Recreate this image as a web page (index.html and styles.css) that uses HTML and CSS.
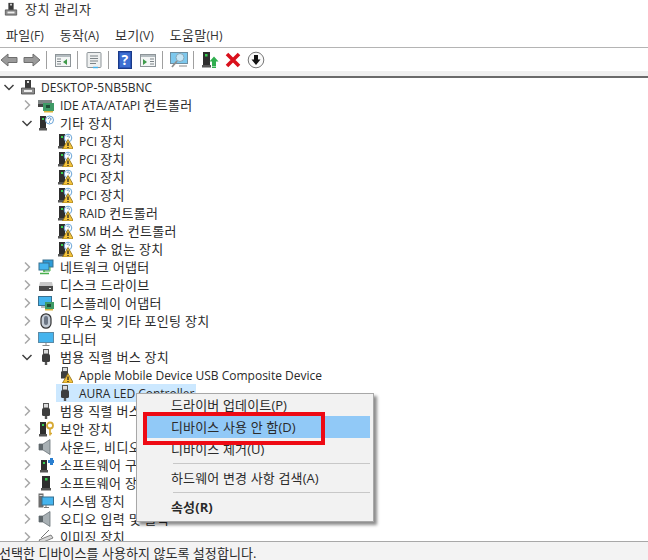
FILE: index.html
```html
<!DOCTYPE html>
<html lang="ko">
<head>
<meta charset="utf-8">
<title>장치 관리자</title>
<link rel="stylesheet" href="styles.css">
</head>
<body>
<svg class="defs" width="0" height="0" aria-hidden="true">
  <defs>
    <g id="warn"><path d="M4 15.5 9.5 6 15 15.5Z" fill="#f5c33b" stroke="#8a6a10" stroke-width=".8"/><path d="M9.5 9v3.4M9.5 13.4v1" stroke="#222" stroke-width="1.3"/></g>
    <g id="tower"><rect x="2" y="1" width="6" height="12" fill="#2e2e2e"/><rect x="4" y="3" width="2" height="2" fill="#35d04f"/><rect x="1" y="13" width="8" height="2.5" fill="#555"/></g>
    <symbol id="i-pc" viewBox="0 0 16 16"><rect x="5" y="1" width="6" height="8" fill="#3a3a3a"/><rect x="7" y="2" width="2" height="2" fill="#ddd"/><path d="M1.5 9h13v6h-13z" fill="#8d8d8d" stroke="#444" stroke-width=".8"/><rect x="4" y="11" width="8" height="2" fill="#eee"/></symbol>
    <symbol id="i-ide" viewBox="0 0 16 16"><path d="M0 3h14v4H0z" fill="#7f8585"/><path d="M0 7h6v3H0z" fill="#444"/><rect x="5" y="6" width="11" height="8" fill="#3f9a66"/><path d="M6 14h9v1.500H6z" fill="#d9b43c"/><rect x="8" y="8" width="4" height="3" fill="#1f4d36"/></symbol>
    <symbol id="i-other" viewBox="0 0 16 16"><use href="#tower"/><circle cx="11.500" cy="5" r="4" fill="#fff" stroke="#6aa5d8" stroke-width="1"/><path d="M10.200 4a1.400 1.400 0 1 1 2 1.400c-.6.3-.7.6-.7 1M11.500 7.200v.8" fill="none" stroke="#3a78b5" stroke-width=".9"/></symbol>
    <symbol id="i-unk" viewBox="0 0 16 16"><use href="#tower"/><circle cx="11" cy="5" r="3.800" fill="#fff" stroke="#6aa5d8"/><path d="M10 4a1.200 1.200 0 1 1 1.700 1.200" fill="none" stroke="#3a78b5" stroke-width=".8"/><use href="#warn" transform="translate(1.500 .5)"/></symbol>
    <symbol id="i-net" viewBox="0 0 16 16"><rect x="5" y="1" width="10" height="7" fill="#2c9bd8" stroke="#39708f"/><rect x="1" y="4" width="10" height="7" fill="#45b4ee" stroke="#39708f"/><path d="M6 11v2M2 14.500h9" stroke="#49b04d" stroke-width="1.600"/><path d="M12 8v4h-6" fill="none" stroke="#49b04d"/></symbol>
    <symbol id="i-disk" viewBox="0 0 16 16"><path d="M2 5h12l1 4H1z" fill="#c9c9c9"/><rect x="1" y="9" width="14" height="5" fill="#4a4a4a"/><rect x="11" y="11" width="2" height="1" fill="#e8e8e8"/></symbol>
    <symbol id="i-disp" viewBox="0 0 16 16"><rect x=".5" y="1.500" width="13" height="9" fill="#45b4ee" stroke="#39708f"/><path d="M3 12h7" stroke="#777"/><rect x="7" y="7" width="9" height="7" fill="#3f9a66"/><rect x="9" y="9" width="4" height="3" fill="#1f4d36"/><path d="M7 14h8v1.500H7z" fill="#d9b43c"/></symbol>
    <symbol id="i-mouse" viewBox="0 0 16 16"><rect x="3" y=".8" width="10" height="14.400" rx="5" fill="#c4ccd6" stroke="#333" stroke-width="1.200"/><rect x="6" y="3" width="4" height="9" rx="2" fill="#6c7684"/></symbol>
    <symbol id="i-mon" viewBox="0 0 16 16"><rect x=".5" y="1.500" width="15" height="10" fill="#45b4ee" stroke="#5b8aa6"/><path d="M8 12v2M4.500 14.500h7" stroke="#8a8a8a"/></symbol>
    <symbol id="i-usb" viewBox="0 0 16 16"><rect x="5.500" y=".5" width="5" height="4.500" fill="#dcdcdc" stroke="#555"/><rect x="4" y="5" width="8" height="8" rx="1.500" fill="#3d3d3d"/><rect x="6.800" y="13" width="2.400" height="3" fill="#555"/></symbol>
    <symbol id="i-usbw" viewBox="0 0 16 16"><rect x="5.500" y=".5" width="5" height="4" fill="#dcdcdc" stroke="#555"/><rect x="4" y="4.500" width="7" height="7" fill="#3d3d3d"/><use href="#warn" transform="translate(1.500 .5)"/></symbol>
    <symbol id="i-sec" viewBox="0 0 16 16"><use href="#tower"/><circle cx="12" cy="4.500" r="3" fill="none" stroke="#d6a933" stroke-width="1.800"/><path d="M12 7.500v7M12 12.500h2" stroke="#d6a933" stroke-width="1.600"/></symbol>
    <symbol id="i-snd" viewBox="0 0 16 16"><path d="M1 5h4l7-4.500v15L5 11H1z" fill="#a8b0b4" stroke="#6b7478" stroke-width=".8"/><path d="M1 5h4v6H1z" fill="#5f676b"/></symbol>
    <symbol id="i-swc" viewBox="0 0 16 16"><rect x="3" y="3" width="6" height="10" fill="#2e2e2e"/><rect x="5" y="5" width="2" height="2" fill="#35d04f"/><rect x="2" y="13" width="8" height="2.500" fill="#555"/><path d="M10 3h2V1h3v2h1v3h-1v2h-3V6h-2z" fill="#2a7fd0"/></symbol>
    <symbol id="i-swd" viewBox="0 0 16 16"><rect x="4" y="1" width="8" height="12" fill="#2e2e2e"/><rect x="7" y="3" width="2.500" height="2.500" fill="#35d04f"/><rect x="3" y="13" width="10" height="2.500" fill="#555"/></symbol>
    <symbol id="i-sys" viewBox="0 0 16 16"><rect x=".5" y=".5" width="5" height="14" fill="#6d6d6d"/><rect x="1.500" y="2" width="3" height="1" fill="#ddd"/><rect x="4" y="4" width="11.500" height="8" fill="#45b4ee" stroke="#39708f"/><path d="M8 12v2M6 14.500h5" stroke="#777"/></symbol>
    <symbol id="i-img" viewBox="0 0 16 16"><path d="M1 11 13 6l2 3-12 5z" fill="#d8d8d8" stroke="#666" stroke-width=".8"/><path d="M3 9 11 1" stroke="#777"/><rect x="5" y="12.500" width="10" height="2" fill="#555"/></symbol>
    <symbol id="t-back" viewBox="0 0 18 18"><path d="M1 9 8 3v3.500h9v5H8V15z" fill="#9a9a9a" stroke="#6e6e6e"/></symbol>
    <symbol id="t-fwd" viewBox="0 0 18 18"><path d="M17 9 10 3v3.500H1v5h9V15z" fill="#9a9a9a" stroke="#6e6e6e"/></symbol>
    <symbol id="t-win1" viewBox="0 0 18 18"><rect x="1.500" y="3.500" width="15" height="12" fill="#f4f6f6" stroke="#8d9498"/><path d="M2 4h14v2H2z" fill="#b4bcc0"/><path d="M3 8h4M3 10.500h4M3 13h4" stroke="#7c8488"/><path d="M13 8v6l-4-3z" fill="#3f9a4a"/></symbol>
    <symbol id="t-prop" viewBox="0 0 18 18"><rect x="2" y="1.500" width="14" height="15" rx="1" fill="#eef0f0" stroke="#8d9498"/><path d="M5 5h8M5 7.500h8M5 10h8M5 12.500h6" stroke="#7c8488"/><path d="M8 16.500h5" stroke="#45b4ee" stroke-width="1.500"/></symbol>
    <symbol id="t-help" viewBox="0 0 18 18"><rect x="2.500" y=".5" width="13" height="17" fill="#2b56b8" stroke="#1a3a88"/><rect x="4" y="2" width="10" height="14" fill="#3d6fd2"/></symbol>
    <symbol id="t-win2" viewBox="0 0 18 18"><rect x="1.500" y="3.500" width="15" height="12" fill="#f4f6f6" stroke="#8d9498"/><path d="M2 4h14v2H2z" fill="#b4bcc0"/><path d="M11 8h4M11 10.500h4M11 13h4" stroke="#7c8488"/><path d="M4 8v6l4-3z" fill="#3f9a4a"/></symbol>
    <symbol id="t-scan" viewBox="0 0 18 18"><rect x=".5" y="1.500" width="17" height="11" fill="#7cc8ee" stroke="#6f8ea0"/><circle cx="10" cy="6.500" r="4" fill="#c6e6f6" stroke="#8aa7b6"/><path d="M7 10 2 16" stroke="#8d8d8d" stroke-width="1.800"/><path d="M9 15h8" stroke="#888"/></symbol>
    <symbol id="t-upd" viewBox="0 0 18 18"><rect x="2" y="1" width="7" height="13" fill="#2e2e2e"/><rect x="4" y="3" width="2.500" height="2.500" fill="#35d04f"/><rect x="1" y="14" width="9" height="2.500" fill="#555"/><path d="M13 5.500 17.500 10.500H15V15h-4v-4.500H8.500z" fill="#2fae4e"/><path d="M11 15.500h4v1.500h-4z" fill="#2fae4e"/></symbol>
    <symbol id="t-x" viewBox="0 0 18 18"><path d="M3 3 15 15M15 3 3 15" stroke="#d9101c" stroke-width="3.600"/></symbol>
    <symbol id="t-down" viewBox="0 0 18 18"><circle cx="9" cy="9" r="7.800" fill="#fafafa" stroke="#777"/><path d="M7 4h4v4.500h2.500L9 14 4.500 8.500H7z" fill="#111"/></symbol>
    <symbol id="c-r" viewBox="0 0 12 12"><path d="M4 1.500 8.500 6 4 10.500" fill="none" stroke="#a8a8a8" stroke-width="1.500"/></symbol>
    <symbol id="c-d" viewBox="0 0 12 12"><path d="M1.500 4 6 8.500 10.500 4" fill="none" stroke="#404040" stroke-width="1.500"/></symbol>
  </defs>
</svg>

<div class="window">
  <header class="titlebar">
    <svg class="ico"><use href="#i-pc"/></svg>
    <span class="title">장치 관리자</span>
  </header>
  <nav class="menubar">
    <span>파일<em>(F)</em></span><span>동작<em>(A)</em></span><span>보기<em>(V)</em></span><span>도움말<em>(H)</em></span>
  </nav>
  <div class="toolbar">
    <svg class="tool"><use href="#t-back"/></svg>
    <svg class="tool"><use href="#t-fwd"/></svg>
    <i class="sep"></i>
    <svg class="tool"><use href="#t-win1"/></svg>
    <i class="sep"></i>
    <svg class="tool"><use href="#t-prop"/></svg>
    <i class="sep"></i>
    <span class="help"><svg class="tool"><use href="#t-help"/></svg><b>?</b></span>
    <svg class="tool"><use href="#t-win2"/></svg>
    <i class="sep"></i>
    <svg class="tool"><use href="#t-scan"/></svg>
    <i class="sep"></i>
    <svg class="tool"><use href="#t-upd"/></svg>
    <svg class="tool"><use href="#t-x"/></svg>
    <svg class="tool"><use href="#t-down"/></svg>
  </div>
  <div class="strip"></div>
  <main class="tree">
    <div class="row l0"><svg class="tog"><use href="#c-d"/></svg><svg class="ico"><use href="#i-pc"/></svg><span><em>DESKTOP-5NB5BNC</em></span></div>
    <div class="row l1"><svg class="tog"><use href="#c-r"/></svg><svg class="ico"><use href="#i-ide"/></svg><span><em>IDE ATA/ATAPI </em>컨트롤러</span></div>
    <div class="row l1"><svg class="tog"><use href="#c-d"/></svg><svg class="ico"><use href="#i-other"/></svg><span>기타 장치</span></div>
    <div class="row l2"><i class="tog"></i><svg class="ico"><use href="#i-unk"/></svg><span><em>PCI </em>장치</span></div>
    <div class="row l2"><i class="tog"></i><svg class="ico"><use href="#i-unk"/></svg><span><em>PCI </em>장치</span></div>
    <div class="row l2"><i class="tog"></i><svg class="ico"><use href="#i-unk"/></svg><span><em>PCI </em>장치</span></div>
    <div class="row l2"><i class="tog"></i><svg class="ico"><use href="#i-unk"/></svg><span><em>PCI </em>장치</span></div>
    <div class="row l2"><i class="tog"></i><svg class="ico"><use href="#i-unk"/></svg><span><em>RAID </em>컨트롤러</span></div>
    <div class="row l2"><i class="tog"></i><svg class="ico"><use href="#i-unk"/></svg><span><em>SM </em>버스 컨트롤러</span></div>
    <div class="row l2"><i class="tog"></i><svg class="ico"><use href="#i-unk"/></svg><span>알 수 없는 장치</span></div>
    <div class="row l1"><svg class="tog"><use href="#c-r"/></svg><svg class="ico"><use href="#i-net"/></svg><span>네트워크 어댑터</span></div>
    <div class="row l1"><svg class="tog"><use href="#c-r"/></svg><svg class="ico"><use href="#i-disk"/></svg><span>디스크 드라이브</span></div>
    <div class="row l1"><svg class="tog"><use href="#c-r"/></svg><svg class="ico"><use href="#i-disp"/></svg><span>디스플레이 어댑터</span></div>
    <div class="row l1"><svg class="tog"><use href="#c-r"/></svg><svg class="ico"><use href="#i-mouse"/></svg><span>마우스 및 기타 포인팅 장치</span></div>
    <div class="row l1"><svg class="tog"><use href="#c-r"/></svg><svg class="ico"><use href="#i-mon"/></svg><span>모니터</span></div>
    <div class="row l1"><svg class="tog"><use href="#c-d"/></svg><svg class="ico"><use href="#i-usb"/></svg><span>범용 직렬 버스 장치</span></div>
    <div class="row l2"><i class="tog"></i><svg class="ico"><use href="#i-usbw"/></svg><span><em>Apple Mobile Device USB Composite Device</em></span></div>
    <div class="row l2 selected"><i class="tog"></i><div class="selbox"><svg class="ico"><use href="#i-usb"/></svg><span><em>AURA LED Controller</em></span></div></div>
    <div class="row l1"><svg class="tog"><use href="#c-r"/></svg><svg class="ico"><use href="#i-usb"/></svg><span>범용 직렬 버스 컨트롤러</span></div>
    <div class="row l1"><svg class="tog"><use href="#c-r"/></svg><svg class="ico"><use href="#i-sec"/></svg><span>보안 장치</span></div>
    <div class="row l1"><svg class="tog"><use href="#c-r"/></svg><svg class="ico"><use href="#i-snd"/></svg><span>사운드, 비디오 및 게임 컨트롤러</span></div>
    <div class="row l1"><svg class="tog"><use href="#c-r"/></svg><svg class="ico"><use href="#i-swc"/></svg><span>소프트웨어 구성 요소</span></div>
    <div class="row l1"><svg class="tog"><use href="#c-r"/></svg><svg class="ico"><use href="#i-swd"/></svg><span>소프트웨어 장치</span></div>
    <div class="row l1"><svg class="tog"><use href="#c-r"/></svg><svg class="ico"><use href="#i-sys"/></svg><span>시스템 장치</span></div>
    <div class="row l1"><svg class="tog"><use href="#c-r"/></svg><svg class="ico"><use href="#i-snd"/></svg><span>오디오 입력 및 출력</span></div>
    <div class="row l1"><svg class="tog"><use href="#c-r"/></svg><svg class="ico"><use href="#i-img"/></svg><span>이미징 장치</span></div>
  </main>
  <footer class="status">선택한 디바이스를 사용하지 않도록 설정합니다.</footer>

  <div class="ctx">
    <div class="item">드라이버 업데이트<em>(P)</em></div>
    <div class="item hot">디바이스 사용 안 함<em>(D)</em></div>
    <div class="item">디바이스 제거<em>(U)</em></div>
    <hr>
    <div class="item">하드웨어 변경 사항 검색<em>(A)</em></div>
    <hr>
    <div class="item strong">속성<em>(R)</em></div>
  </div>
  <div class="callout"></div>
</div>
</body>
</html>
```

FILE: styles.css
```css
* { box-sizing: border-box; }
html, body { margin: 0; padding: 0; height: 100%; overflow: hidden; background: #fff; }
body { font: 13px/18px "Open Sans", "Noto Sans CJK KR", sans-serif; color: #2a2a2a; letter-spacing: .3px; }
em { font-style: normal; font-size: 12px; letter-spacing: 0; }
.defs { position: absolute; }
.window { position: relative; width: 648px; height: 560px; display: flex; flex-direction: column; overflow: hidden; }

.titlebar { height: 18px; display: flex; align-items: center; padding-left: 4px; gap: 7px; }
.titlebar .ico { margin: 0; width: 14px; height: 14px; }
.title { font-size: 13px; letter-spacing: .55px; color: #333; }

.menubar { height: 30px; display: flex; align-items: center; padding: 6px 0 0 6px; gap: 16px; border-bottom: 1px solid #b4b4b4; color: #333; }

.toolbar { height: 23px; display: flex; align-items: center; gap: 5px; }
.tool { width: 18px; height: 18px; display: block; flex: none; }
.sep { width: 1px; height: 18px; background: #a0a0a0; margin-right: 2px; flex: none; }
.help { position: relative; display: block; width: 18px; height: 18px; }
.help b { position: absolute; inset: 0; text-align: center; color: #fff; font-size: 14px; line-height: 18px; }
.strip { height: 7px; background: #f0f0f0; border-bottom: 2px solid #6a6a6a; }

.tree { flex: 1; min-height: 0; overflow: hidden; }
.row { height: 18px; display: flex; align-items: center; white-space: nowrap; }
.row.l0 { padding-left: 3px; }
.row.l0 .ico { margin-right: 5px; }
.row.l1 { padding-left: 21px; }
.row.l2 { padding-left: 40px; }
.tog { display: block; width: 12px; height: 12px; flex: none; }
.ico { display: block; width: 16px; height: 16px; flex: none; margin: 0 6px 0 5px; }
.selbox { display: flex; align-items: center; height: 18px; background: #cce8ff; margin-left: 4px; padding-right: 2px; }
.selbox .ico { margin-left: 1px; }

.status { height: 19px; flex: none; border-top: 1px solid #a8a8a8; background: #f3f3f3; padding-top: 2px; text-indent: -1px; letter-spacing: .05px; white-space: nowrap; }

.ctx { position: absolute; left: 136px; top: 393px; width: 238px; height: 129px; background: #f2f2f2; border: 1px solid #a8a8a8; box-shadow: 3px 3px 3px rgba(0,0,0,.45); padding: 0 3px 0 8px; letter-spacing: .15px; }
.ctx em { font-size: 13px; }
.item { height: 22px; line-height: 22px; padding-left: 26px; white-space: nowrap; }
.item.hot { background: #91c9f7; }
.item.strong { font-weight: 700; }
.ctx hr { margin: 3px 0 3px 28px; border: 0; border-top: 1px solid #c8c8c8; height: 0; }
.callout { position: absolute; left: 143px; top: 412px; width: 182px; height: 33px; border: 4px solid #ee0a14; }
```
